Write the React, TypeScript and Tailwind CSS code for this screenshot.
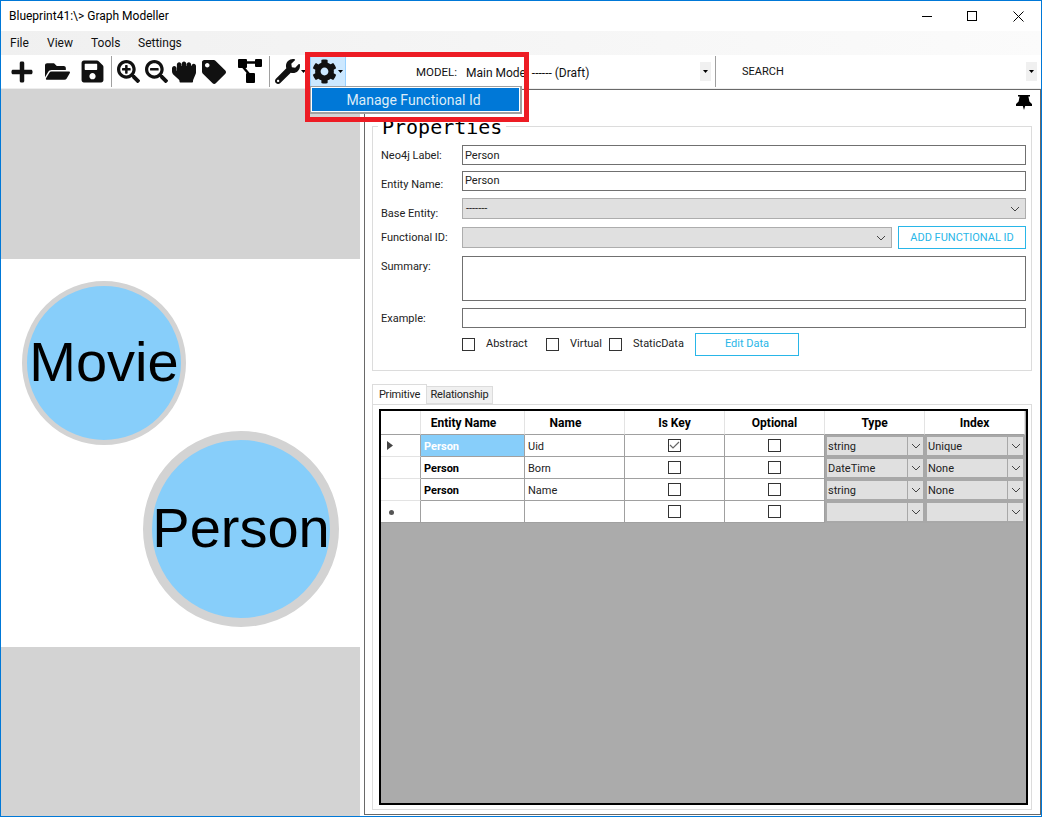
import React from "react";
import {
  FaPlus,
  FaFolderOpen,
  FaSave,
  FaSearchPlus,
  FaSearchMinus,
  FaHandRock,
  FaTag,
  FaWrench,
  FaCog,
} from "react-icons/fa";

const font = "font-['Roboto','Liberation_Sans',sans-serif]";

const Caret = () => (
  <svg width="5" height="3" viewBox="0 0 5 3" className="shrink-0">
    <path d="M0 0h5L2.5 3z" fill="#000" />
  </svg>
);

const Chevron = () => (
  <svg width="10" height="6" viewBox="0 0 10 6" className="shrink-0">
    <path d="M1 1l4 4 4-4" fill="none" stroke="#444" strokeWidth="1" />
  </svg>
);

const Diagram = () => (
  <svg width="24" height="25" viewBox="0 0 24 25">
    <rect x="0" y="0" width="9" height="9" rx="1" />
    <rect x="17" y="0" width="7" height="8" rx="1" />
    <rect x="8" y="14" width="9" height="10" rx="1" />
    <path d="M8 3.5h10M5 8l6 7" stroke="#000" strokeWidth="2.4" fill="none" />
  </svg>
);

const Pin = () => (
  <svg width="16" height="15" viewBox="0 0 16 15">
    <path d="M2 0h12v1.6h-1.6l1 5L16 9v2H9.2L8 15l-1.2-4H0V9l2.6-2.4 1-5H2z" />
  </svg>
);

const Check = ({ checked }: { checked?: boolean }) => (
  <div className="w-[13px] h-[13px] border border-[#333] bg-white flex items-center justify-center shrink-0">
    {checked && (
      <svg width="11" height="9" viewBox="0 0 11 9">
        <path d="M1 4l3 3 6-6" fill="none" stroke="#666" strokeWidth="1.2" />
      </svg>
    )}
  </div>
);

const Select = ({ className, text }: { className: string; text?: string }) => (
  <div className={`${className} border border-[#adadad] bg-[#e0e0e0] flex items-center justify-between pl-[3px] pr-[5px]`}>
    <span className="text-[11px] leading-none text-[#222]">{text}</span>
    <Chevron />
  </div>
);

const Label = ({ children, className }: { children: React.ReactNode; className?: string }) => (
  <div className={`w-[81px] shrink-0 text-[11px] text-[#222] ${className ?? ""}`}>{children}</div>
);

const GridSelect = ({ text }: { text?: string }) => (
  <div className="h-[22px] border-2 border-[#a8a8a8] bg-[#e0e0e0] flex items-center">
    <span className="flex-1 pl-[1px] text-[11px] leading-none text-[#222]">{text}</span>
    <div className="w-[16px] h-full border-l border-[#a8a8a8] flex items-center justify-center">
      <Chevron />
    </div>
  </div>
);

const rows = [
  { name: "Uid", key: true, type: "string", index: "Unique", first: true },
  { name: "Born", key: false, type: "DateTime", index: "None" },
  { name: "Name", key: false, type: "string", index: "None" },
];

const cell = "h-[22px] border-b border-r border-[#a0a0a0] flex items-center bg-white";
const head = "h-[24px] border-b border-r border-b-[#a0a0a0] border-r-[#e3e3e3] flex items-center justify-center text-[12px] font-bold text-black bg-white";

export default function App() {
  return (
    <div className={`${font} relative w-[1042px] h-[817px] border border-[#0078d7] bg-white flex flex-col overflow-hidden`}>
      {/* title bar */}
      <div className="h-[30px] shrink-0 flex items-center justify-between">
        <span className="pl-[8px] text-[12px] text-black">Blueprint41:\&gt; Graph Modeller</span>
        <div className="flex items-center">
          <div className="w-[45px] flex justify-center">
            <div className="w-[10px] h-px bg-black" />
          </div>
          <div className="w-[45px] mr-[2px] flex justify-center">
            <div className="w-[10px] h-[10px] border border-black" />
          </div>
          <div className="w-[45px] flex justify-center pr-[1px]">
            <svg width="11" height="11" viewBox="0 0 11 11">
              <path d="M0.5 0.5l10 10M10.5 0.5l-10 10" stroke="#000" strokeWidth="1" />
            </svg>
          </div>
        </div>
      </div>

      {/* menu bar */}
      <div className="h-[24px] shrink-0 flex items-center bg-gradient-to-r from-[#f0f0f0] to-[#fbfbfb] text-[12px] text-[#111]">
        <span className="ml-[9px] w-[37px]">File</span>
        <span className="w-[44px]">View</span>
        <span className="w-[47px]">Tools</span>
        <span>Settings</span>
      </div>

      {/* toolbar */}
      <div className="h-[34px] shrink-0 flex items-center border-b border-[#eeeeee] text-[11px] text-[#111]">
        <div className="w-[38px] pl-[9px]"><FaPlus size={24} /></div>
        <div className="w-[36px] pl-[6px]"><FaFolderOpen size={25} /></div>
        <div className="w-[36px] pl-[5px]"><FaSave size={25} /></div>
        <div className="w-px h-[31px] bg-[#a0a0a0]" />
        <div className="w-[28px] pl-[5px]"><FaSearchPlus size={23} /></div>
        <div className="w-[28px] pl-[5px]"><FaSearchMinus size={23} /></div>
        <div className="w-[31px] pl-[4px]"><FaHandRock size={24} /></div>
        <div className="w-[34px] pl-[3px]"><FaTag size={24} /></div>
        <div className="w-[36px] pl-[5px]"><Diagram /></div>
        <div className="w-px h-[31px] bg-[#a0a0a0]" />
        <div className="w-[40px] flex items-center pl-[5px] gap-[1px]">
          <FaWrench size={25} />
          <Caret />
        </div>
        <div className="w-[36px] h-[33px] bg-[#cce8ff] border border-[#99d1ff] flex items-center gap-[1px] pl-[1px]">
          <FaCog size={25} />
          <Caret />
        </div>
        <span className="ml-[70px] w-[50px] mt-[2px] text-[11.5px]">MODEL:</span>
        <span className="w-[234px] mt-[2px] text-[12px]">Main Model ------ (Draft)</span>
        <div className="w-[11px] h-[19px] bg-[#f0f0f0] flex items-center justify-center"><Caret /></div>
        <div className="ml-[4px] w-px h-[31px] bg-[#a0a0a0]" />
        <span className="ml-[26px] w-[284px] mt-[2px]">SEARCH</span>
        <div className="w-[11px] h-[19px] bg-[#f0f0f0] flex items-center justify-center"><Caret /></div>
      </div>

      {/* body */}
      <div className="flex-1 flex min-h-0">
        <div className="relative w-[359px] shrink-0 flex flex-col">
          <div className="h-[170px] bg-[#d3d3d3]" />
          <div className="flex-1 bg-white" />
          <div className="h-[169px] bg-[#d3d3d3]" />
          <div className="absolute left-[21px] top-[192px] w-[164px] h-[164px] rounded-full border-[5px] border-[#d3d3d3] bg-[#87cefa] flex items-center justify-center pb-[2px] font-['Liberation_Sans'] text-[56px] text-black">
            Movie
          </div>
          <div className="absolute left-[142px] top-[342px] w-[196px] h-[196px] rounded-full border-[9px] border-[#d3d3d3] bg-[#87cefa] flex items-center justify-center pb-[2px] font-['Liberation_Sans'] text-[56px] text-black">
            Person
          </div>
        </div>

        <div className="ml-[4px] flex-1 border border-[#696969] mb-[1px] flex flex-col pl-[7px] pr-[8px] pb-[4px] min-w-0">
          <div className="h-[36px] shrink-0 flex justify-end pr-0 pt-[5px]">
            <Pin />
          </div>

          {/* properties */}
          <div className="relative shrink-0 border border-[#dcdcdc] pl-[8px] pr-[5px] pt-[18px] pb-[14px] text-[11px] text-[#222]">
            <div className="absolute left-[5px] top-[-12px] bg-white px-[4px] font-['DejaVu_Sans_Mono'] text-[20px] leading-[24px] text-black">
              Properties
            </div>
            <div className="flex items-center">
              <Label className="translate-y-[1px]">Neo4j Label:</Label>
              <div className="flex-1 h-[20px] border border-[#707070] pl-[2px] pt-[2px] flex items-center">Person</div>
            </div>
            <div className="flex items-center mt-[6px]">
              <Label className="translate-y-[4px]">Entity Name:</Label>
              <div className="flex-1 h-[20px] border border-[#707070] pl-[2px] pt-[1px] flex items-center">Person</div>
            </div>
            <div className="flex items-center mt-[7px]">
              <Label className="translate-y-[6px]">Base Entity:</Label>
              <Select className="flex-1 h-[21px]" text="-------" />
            </div>
            <div className="flex items-center mt-[8px]">
              <Label className="translate-y-[1px]">Functional ID:</Label>
              <Select className="w-[430px] h-[21px]" />
              <div className="ml-[6px] flex-1 h-[23px] -my-[1px] pt-[1px] border border-[#29b6e8] flex items-center justify-center text-[#29b6e8]">
                ADD FUNCTIONAL ID
              </div>
            </div>
            <div className="flex items-start mt-[8px]">
              <Label className="pt-[3px]">Summary:</Label>
              <div className="flex-1 h-[45px] border border-[#707070]" />
            </div>
            <div className="flex items-center mt-[7px]">
              <Label className="translate-y-[1px]">Example:</Label>
              <div className="flex-1 h-[20px] border border-[#707070]" />
            </div>
            <div className="flex items-center mt-[5px] h-[23px] pl-[81px]">
              <div className="w-[84px] flex items-center gap-[11px]"><Check /><span>Abstract</span></div>
              <div className="w-[63px] flex items-center gap-[11px]"><Check /><span>Virtual</span></div>
              <div className="w-[86px] flex items-center gap-[11px]"><Check /><span>StaticData</span></div>
              <div className="w-[104px] h-[23px] border border-[#29b6e8] flex items-center justify-center text-[#29b6e8]">Edit Data</div>
            </div>
          </div>

          {/* tabs */}
          <div className="mt-[13px] flex items-end h-[20px] shrink-0 text-[11px] tracking-[-0.2px] text-[#222]">
            <div className="w-[55px] h-[20px] pt-[1px] border border-b-0 border-[#dcdcdc] bg-white flex items-center justify-center">Primitive</div>
            <div className="w-[66px] h-[18px] pt-[1px] border border-l-0 border-[#dcdcdc] bg-[#f0f0f0] flex items-center justify-center">Relationship</div>
          </div>

          <div className="flex-1 min-h-0 border border-[#dcdcdc] pl-[6px] pt-[4px] pb-[4px] pr-[3px] flex">
            <div className="flex-1 border-2 border-black bg-[#ababab] text-[11px] text-[#222]">
              <div className="grid grid-cols-[40px_104px_100px_100px_100px_100px_100px]">
                <div className={head} />
                <div className={`${head} pr-[18px]`}>Entity Name</div>
                <div className={`${head} pr-[18px]`}>Name</div>
                <div className={head}>Is Key</div>
                <div className={head}>Optional</div>
                <div className={head}>Type</div>
                <div className={head}>Index</div>

                {rows.map((r) => (
                  <React.Fragment key={r.name}>
                    <div className="h-[22px] border-b border-r border-b-[#e3e3e3] border-r-[#a0a0a0] bg-white flex items-center pl-[6px]">
                      {r.first && (
                        <svg width="6" height="9" viewBox="0 0 6 9"><path d="M0 0l6 4.5L0 9z" fill="#444" /></svg>
                      )}
                    </div>
                    <div className={`${cell} pl-[3px] pt-[3px] font-bold ${r.first ? "bg-[#87cefa]! text-white" : "text-black"}`}>Person</div>
                    <div className={`${cell} pl-[3px] pt-[3px]`}>{r.name}</div>
                    <div className={`${cell} justify-center`}><Check checked={r.key} /></div>
                    <div className={`${cell} justify-center`}><Check /></div>
                    <GridSelect text={r.type} />
                    <GridSelect text={r.index} />
                  </React.Fragment>
                ))}

                <div className="h-[22px] border-b border-r border-[#a0a0a0] bg-white flex items-center pl-[8px] pt-[2px]">
                  <span className="w-[5px] h-[5px] rounded-full bg-[#555]" />
                </div>
                <div className={cell} />
                <div className={cell} />
                <div className={`${cell} justify-center`}><Check /></div>
                <div className={`${cell} justify-center`}><Check /></div>
                <GridSelect />
                <GridSelect />
              </div>
            </div>
          </div>
        </div>
      </div>

      {/* open dropdown menu and annotation frame */}
      <div className="absolute left-[309px] top-[85px] w-[212px] h-[28px] border border-[#a0a0a0] border-b-2 border-r-2 bg-white p-px">
        <div className="h-full bg-[#0078d7] flex items-center justify-center pr-[4px] pt-[2px] text-[14px] text-[#dcecf8]">
          Manage Functional Id
        </div>
      </div>
      <div className="absolute left-[304px] top-[51px] w-[224px] h-[70px] border-[5px] border-[#ed1c24]" />
    </div>
  );
}
